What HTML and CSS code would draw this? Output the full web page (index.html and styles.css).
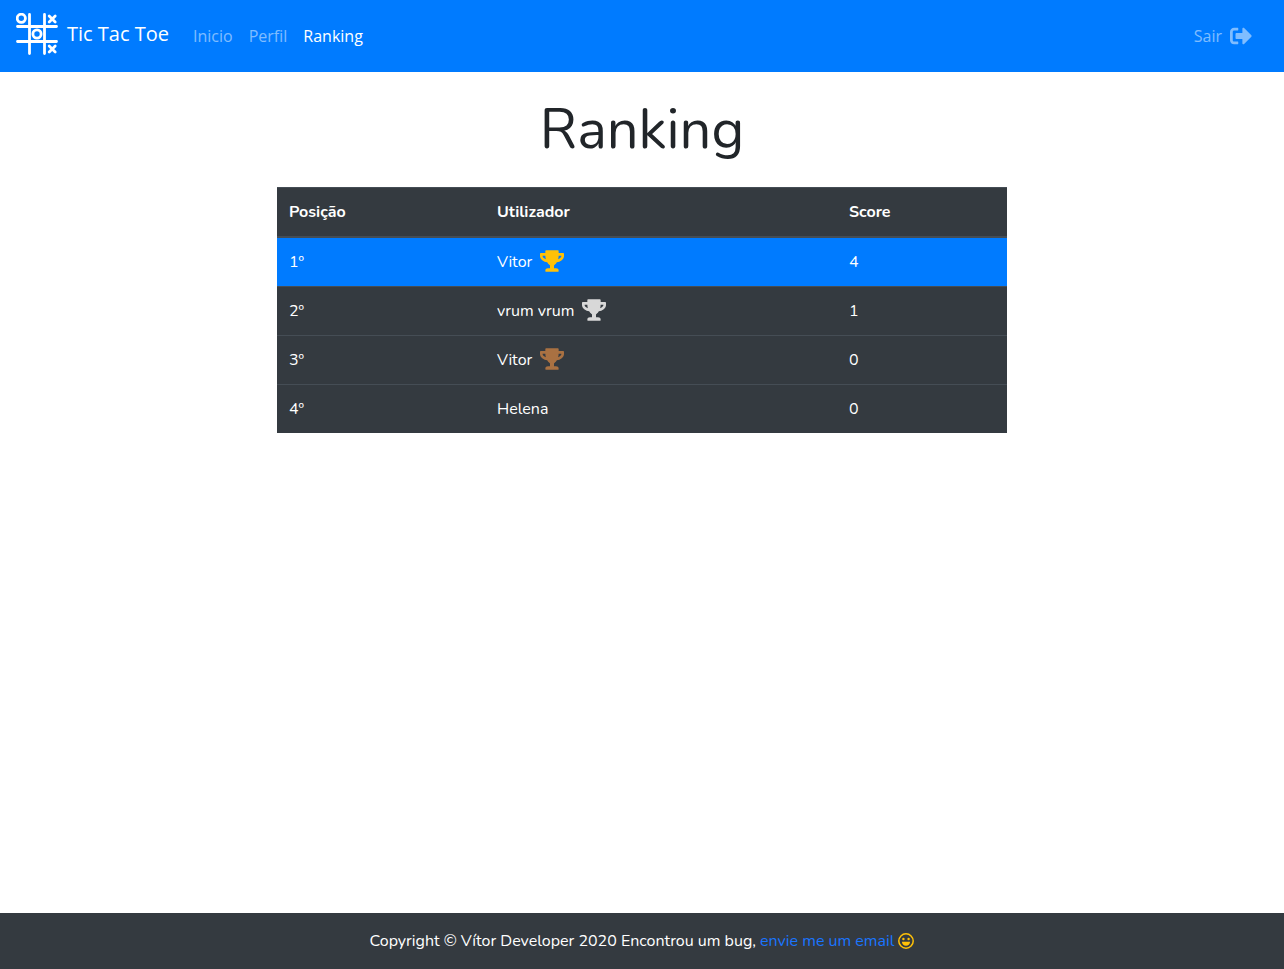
FILE: index.html
```html
<!DOCTYPE html>
<html lang="pt">
<head>
<meta charset="utf-8">
<meta name="viewport" content="width=device-width, initial-scale=1">
<title>Ranking - Tic Tac Toe</title>
<link rel="stylesheet" href="styles.css">
</head>
<body>
<svg class="symbols" aria-hidden="true">
  <symbol id="trophy" viewBox="0 0 576 512"><path d="M552 64H448V24c0-13.300-10.700-24-24-24H152c-13.300 0-24 10.700-24 24v40H24C10.700 64 0 74.700 0 88v56c0 35.700 22.500 72.400 61.900 100.700 31.500 22.700 69.800 37.100 110 41.700C203.300 338.500 240 360 240 360v72h-48c-35.300 0-64 20.700-64 56v12c0 6.600 5.400 12 12 12h296c6.600 0 12-5.400 12-12v-12c0-35.300-28.700-56-64-56h-48v-72s36.700-21.500 68.100-73.600c40.300-4.600 78.600-19 110-41.700 39.300-28.300 61.900-65 61.900-100.700V88c0-13.300-10.700-24-24-24zM99.300 192.800C74.900 175.200 64 155.600 64 144v-16h64.200c1 32.600 5.800 61.200 12.800 86.200-15.100-5.200-29.200-12.400-41.700-21.400zM512 144c0 16.100-17.700 36.100-35.300 48.800-12.500 9-26.700 16.200-41.800 21.400 7-25 11.800-53.600 12.800-86.200H512v16z"/></symbol>
</svg>
<nav class="navbar">
  <a class="brand" href="#">
    <svg class="logo" viewBox="0 0 42 42" aria-hidden="true">
      <path d="M13.500 1.500v39M28.500 1.500v39M1.500 13.500h39M1.500 28.500h39"/>
      <circle cx="5.300" cy="5.300" r="4.100"/>
      <circle cx="21" cy="21" r="4.100"/>
      <path d="M33.200 3l6 6M39.200 3l-6 6M33.200 33l6 6M39.200 33l-6 6"/>
    </svg>
    <span>Tic Tac Toe</span>
  </a>
  <ul class="links">
    <li><a class="link" href="#">Inicio</a></li>
    <li><a class="link" href="#">Perfil</a></li>
    <li><a class="link active" href="#" aria-current="page">Ranking</a></li>
  </ul>
  <a class="link logout" href="#">Sair
    <svg class="exit" viewBox="0 0 512 512" aria-hidden="true"><path d="M497 273L329 441c-15 15-41 4.500-41-17v-96H152c-13.300 0-24-10.700-24-24v-96c0-13.300 10.700-24 24-24h136V88c0-21.400 25.900-32 41-17l168 168c9.300 9.400 9.300 24.600 0 34zM192 436v-40c0-6.600-5.400-12-12-12H96c-17.700 0-32-14.300-32-32V160c0-17.700 14.300-32 32-32h84c6.600 0 12-5.400 12-12V76c0-6.600-5.400-12-12-12H96c-53 0-96 43-96 96v192c0 53 43 96 96 96h84c6.600 0 12-5.400 12-12z"/></svg>
  </a>
</nav>
<main class="content">
  <h1 class="title">Ranking</h1>
  <table class="ranking">
    <colgroup><col class="col-position"><col class="col-user"><col></colgroup>
    <thead>
      <tr><th scope="col">Posição</th><th scope="col">Utilizador</th><th scope="col">Score</th></tr>
    </thead>
    <tbody>
      <tr class="current"><td>1º</td><td>Vitor<svg class="trophy gold" aria-hidden="true"><use href="#trophy"/></svg></td><td>4</td></tr>
      <tr><td>2º</td><td>vrum vrum<svg class="trophy silver" aria-hidden="true"><use href="#trophy"/></svg></td><td>1</td></tr>
      <tr><td>3º</td><td>Vitor<svg class="trophy bronze" aria-hidden="true"><use href="#trophy"/></svg></td><td>0</td></tr>
      <tr><td>4º</td><td>Helena</td><td>0</td></tr>
    </tbody>
  </table>
</main>
<footer class="footer">
  <span>Copyright © Vítor Developer 2020 Encontrou um bug, <a class="mail" href="#">envie me um email</a></span>
  <svg class="smile" viewBox="0 0 16 16" aria-hidden="true">
    <circle class="face" cx="8" cy="8" r="7.200"/>
    <circle cx="5.400" cy="6" r="1.200"/>
    <circle cx="10.600" cy="6" r="1.200"/>
    <path d="M3.900 8.700h8.200c-.2 2.400-1.900 4-4.100 4s-3.900-1.600-4.100-4z"/>
  </svg>
</footer>
</body>
</html>
```
FILE: styles.css
```css
* { box-sizing: border-box; }

body {
  display: flex;
  flex-direction: column;
  min-height: 100vh;
  margin: 0;
  background: #fff;
  color: #212529;
  font: 16px/24px Nunito, Lato, sans-serif;
}

a { text-decoration: none; }

.symbols { display: none; }

.navbar {
  display: flex;
  align-items: center;
  min-height: 72px;
  padding: 8px 16px;
  background: #007bff;
  font-family: "Open Sans", sans-serif;
}

.brand {
  display: flex;
  align-items: center;
  gap: 9px;
  margin-right: 16px;
  padding-bottom: 4px;
  color: #fff;
  font-size: 20px;
  line-height: 30px;
}

.logo {
  width: 42px;
  height: 42px;
  fill: none;
  stroke: #fff;
  stroke-width: 2.8;
  stroke-linecap: round;
}

.links {
  display: flex;
  margin: 0;
  padding: 0;
  list-style: none;
}

.link {
  display: flex;
  align-items: center;
  gap: 8px;
  padding: 8px;
  color: rgba(255, 255, 255, .5);
}

.link.active { color: #fff; }

.logout {
  margin-left: auto;
  padding-right: 16px;
}

.exit {
  width: 22px;
  height: 22px;
  fill: currentColor;
}

.content {
  flex: 1;
  width: 100%;
  max-width: 730px;
  margin: 0 auto;
}

.title {
  margin: 24px 0;
  font-size: 56px;
  font-weight: 400;
  line-height: 67px;
  text-align: center;
}

.ranking {
  width: 100%;
  table-layout: fixed;
  border-collapse: collapse;
  background: #343a40;
  color: #fff;
}

.col-position { width: 208px; }

.col-user { width: 352px; }

.ranking th,
.ranking td {
  padding: 12px;
  border-top: 1px solid #454d55;
  text-align: left;
}

.ranking th { border-bottom: 2px solid #454d55; }

.current { background: #007bff; }

.trophy {
  width: 24px;
  height: 22px;
  margin: -4px 0 -4px 8px;
  vertical-align: -1px;
}

.gold { fill: #ffc107; }

.silver { fill: #d8d8d8; }

.bronze { fill: #a97142; }

.footer {
  display: flex;
  flex-wrap: wrap;
  align-items: center;
  justify-content: center;
  gap: 4px;
  padding: 16px;
  background: #343a40;
  color: #fff;
}

.mail { color: #1a75ff; }

.smile {
  width: 16px;
  height: 16px;
  fill: #ffc107;
}

.face {
  fill: none;
  stroke: #ffc107;
  stroke-width: 1.5;
}
```
